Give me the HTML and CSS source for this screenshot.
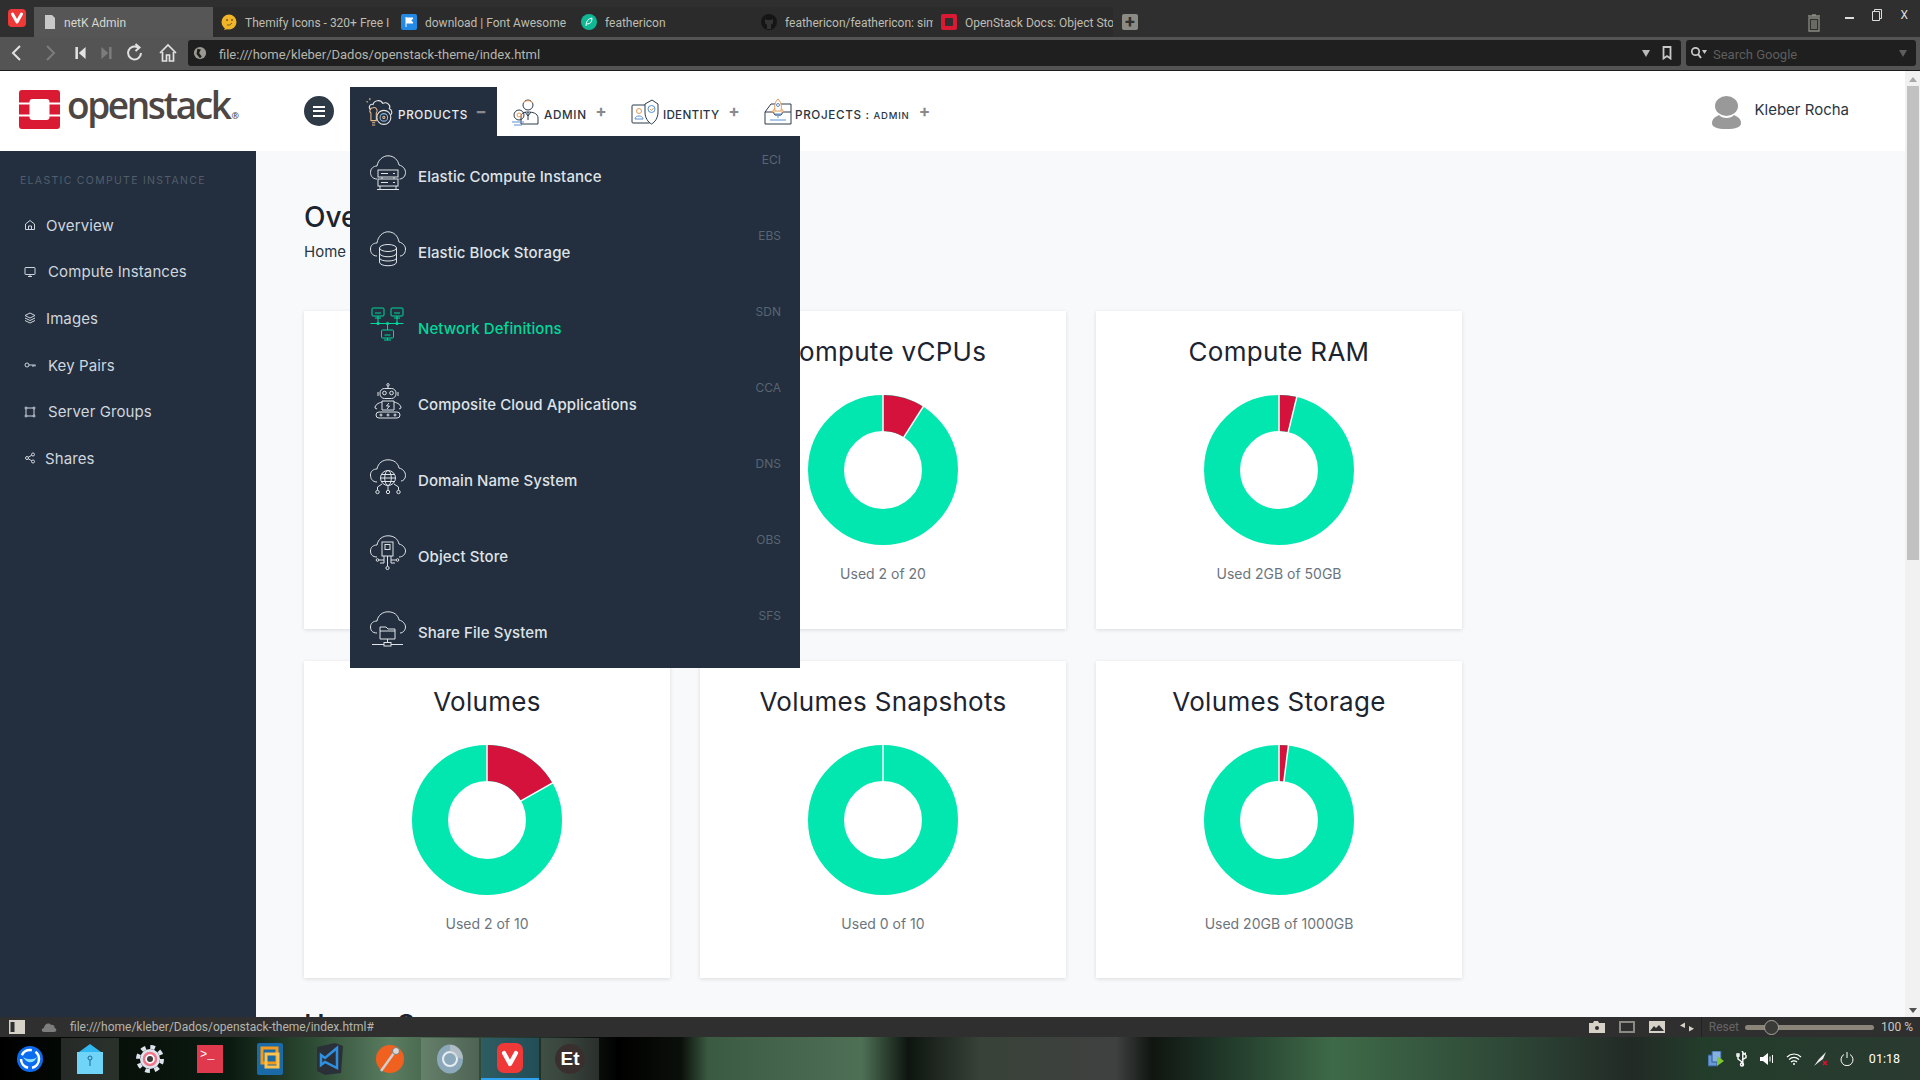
FILE: index.html
```html
<!DOCTYPE html>
<html>
<head>
    <meta charset="utf-8">
    <title>netK Admin</title>
    <link rel="stylesheet" href="styles.css">
</head>
<body>
<div class="screen">

    <!-- browser tabs -->
    <div class="tabstrip">
        <div class="vivaldi-btn">
            <svg viewBox="0 0 18 18" width="18" height="18"><rect width="18" height="18" rx="4" fill="#ef3939"/><path d="M4.5 5 L9 13 L13.5 5" fill="none" stroke="#fff" stroke-width="3" stroke-linecap="round" stroke-linejoin="round"/></svg>
        </div>
        <div class="tab tab-active">
            <svg class="tab-icon" viewBox="0 0 16 16"><path d="M3 1 H10 L13 4 V15 H3 Z" fill="#c9c9c9"/></svg>
            <span class="tab-text">netK Admin</span>
        </div>
        <div class="tab">
            <svg class="tab-icon" viewBox="0 0 16 16"><circle cx="8" cy="8" r="7.5" fill="#f0b429"/><path d="M4 14 L3 16 L7 15 Z" fill="#f0b429"/><circle cx="6" cy="6" r="1" fill="#7a5a10"/><circle cx="11" cy="6" r="1" fill="#7a5a10"/><path d="M6 11 Q9 12 11 9" stroke="#7a5a10" fill="none"/></svg>
            <span class="tab-text">Themify Icons - 320+ Free I</span>
        </div>
        <div class="tab">
            <svg class="tab-icon" viewBox="0 0 16 16"><rect width="16" height="16" rx="2" fill="#228ae6"/><path d="M5 3 V13 M5 4 H12 L10 6.5 L12 9 H5" fill="#fff" stroke="#fff"/></svg>
            <span class="tab-text">download | Font Awesome</span>
        </div>
        <div class="tab">
            <svg class="tab-icon" viewBox="0 0 16 16"><circle cx="8" cy="8" r="8" fill="#0fb795"/><path d="M5 12 Q5 5 11 4 Q11 10 6 10" fill="none" stroke="#fff"/></svg>
            <span class="tab-text">feathericon</span>
        </div>
        <div class="tab">
            <svg class="tab-icon" viewBox="0 0 16 16"><circle cx="8" cy="8" r="8" fill="#151515"/><path d="M4 5 L6 6 H10 L12 5 V9 L10 11 V15 H6 V11 L4 9 Z" fill="#333"/></svg>
            <span class="tab-text">feathericon/feathericon: sim</span>
        </div>
        <div class="tab">
            <svg class="tab-icon" viewBox="0 0 16 16"><rect width="16" height="16" rx="2" fill="#da1a32"/><rect x="4" y="4" width="8" height="8" rx="1" fill="#2f2f2f"/></svg>
            <span class="tab-text">OpenStack Docs: Object Sto</span>
        </div>
        <div class="tab-add">+</div>
        <div class="window-btns">
            <svg class="trash" viewBox="0 0 14 18" width="14" height="18"><path d="M1 2 H13 M5 1 H9 M2 4 H12 V17 H2 Z M5 6 V15 M7 6 V15 M9 6 V15" fill="none" stroke="#8c8c84" stroke-width="1.3"/></svg>
            <span class="win-btn win-min"></span>
            <svg class="win-max" viewBox="0 0 12 12" width="12" height="12"><path d="M3.5 2.5 V0.5 H10.5 V9.5 H8.5 M1.5 2.5 H8.5 V11.5 H1.5 Z" fill="none" stroke="#ddd" stroke-width="1"/></svg>
            <span class="win-close">X</span>
        </div>
    </div>

    <!-- browser toolbar -->
    <div class="toolbar">
        <div class="tool-btns">
            <svg viewBox="0 0 20 20" class="tool"><path d="M13 3 L6 10 L13 17" fill="none" stroke="#e2e2e2" stroke-width="2"/></svg>
            <svg viewBox="0 0 20 20" class="tool"><path d="M7 3 L14 10 L7 17" fill="none" stroke="#7c7c7c" stroke-width="2"/></svg>
            <svg viewBox="0 0 20 20" class="tool tool-small"><path d="M4 3 H7 V17 H4 Z M16 3 V17 L8 10 Z" fill="#e2e2e2"/></svg>
            <svg viewBox="0 0 20 20" class="tool tool-small"><path d="M16 3 H13 V17 H16 Z M4 3 V17 L12 10 Z" fill="#7c7c7c"/></svg>
            <svg viewBox="0 0 20 20" class="tool"><path d="M16 10 A6.5 6.5 0 1 1 13 4.5 M10.5 1 L14.5 4.5 L10.5 8" fill="none" stroke="#e2e2e2" stroke-width="2"/></svg>
            <svg viewBox="0 0 20 20" class="tool"><path d="M2 10 L10 2 L18 10 M4.5 9 V18 H8.5 V12 H11.5 V18 H15.5 V9" fill="none" stroke="#e2e2e2" stroke-width="1.7"/></svg>
        </div>
        <div class="addressbar">
            <svg viewBox="0 0 16 16" width="14" height="14"><circle cx="8" cy="8" r="7" fill="#9a9a92"/><path d="M5 3 L9 4 L7 8 L10 12 L8 14 L4 9 Z" fill="#1f1f1f"/></svg>
            <span class="url">file:///home/kleber/Dados/openstack-theme/index.html</span>
            <span class="arrow-down"></span>
            <svg viewBox="0 0 10 14" width="10" height="14"><path d="M1.5 1 H8.5 V12.5 L5 10 L1.5 12.5 Z" fill="none" stroke="#c9c9c9" stroke-width="1.8"/></svg>
        </div>
        <div class="searchbar">
            <svg viewBox="0 0 18 14" width="18" height="14"><circle cx="5.5" cy="5.5" r="3.7" fill="none" stroke="#c9c9c9" stroke-width="1.7"/><path d="M8 8 L11 12" stroke="#c9c9c9" stroke-width="2"/><path d="M12 4 H17 L14.5 8 Z" fill="#c9c9c9"/></svg>
            <span class="search-text">Search Google</span>
            <span class="arrow-down arrow-dim"></span>
        </div>
    </div>

    <!-- web page -->
    <div class="viewport">
        <div class="page">
            <div class="topbar">
                <div class="logo">
                    <svg viewBox="0 0 41 39" width="41" height="39">
                        <path d="M3 0 H38 Q41 0 41 3 V12.5 H30.5 V12 Q30.5 9 27.5 9 H13.5 Q10.5 9 10.5 12 V12.5 H0 V3 Q0 0 3 0 Z" fill="#da1a32"/>
                        <path d="M0 14.5 H10.5 V24.5 H0 Z M30.5 14.5 H41 V24.5 H30.5 Z" fill="#da1a32"/>
                        <path d="M3 39 H38 Q41 39 41 36 V26.5 H30.5 V27 Q30.5 30 27.5 30 H13.5 Q10.5 30 10.5 27 V26.5 H0 V36 Q0 39 3 39 Z" fill="#da1a32"/>
                    </svg>
                    <span class="logo-text">openstack<sup class="logo-r">®</sup></span>
                </div>
                <button class="burger"><span></span><span></span><span></span></button>

                <div class="nav">
                    <div class="nav-item nav-open">
                        <svg class="nav-icon" viewBox="1 1 25 26">
                            <path d="M6 12 C3 10 5 6 8 7 C9 3 15 2 17 6 C21 4 25 8 23 11 C26 12 26 16 24 17" stroke="#e6e6e6"/>
                            <path d="M6 15 V22 H11 V15 C13 13 11 9 8 10 C5 10 4 13 6 15 Z M7 24 H10 M7 26 H10" stroke="#e8b98a"/>
                            <circle cx="18" cy="19" r="6.5" stroke="#e6e6e6"/><circle cx="18" cy="19" r="3.5" stroke="#8fb8e0"/><circle cx="18" cy="19" r="1" stroke="#e8b98a"/>
                            <path d="M2 4 L3 5 M5 1 L5 3" stroke="#e8b98a"/>
                        </svg>
                        <span class="nav-label">PRODUCTS</span>
                        <span class="nav-sign">−</span>

                        <div class="dropdown">
                            <a class="drop-row" href="#">
                                <svg class="drop-icon" viewBox="0 0 36 36">
                                    <path d="M7 24 C2 24 0.5 20 0.5 17.5 C0.5 13.5 3.5 11 7 11 C8 5 13 0.8 18 0.8 C24 0.8 28 5 29 10 C33 11 35.5 14 35.5 17.5 C35.5 21 33 24 29.5 24"/>
                                    <rect x="8" y="15" width="20" height="7"/><rect x="8" y="24" width="20" height="7"/>
                                    <path d="M11 18.5 H18 M11 27.5 H18 M23 18.5 H25 M23 27.5 H25 M12 22 V24 M24 22 V24 M10 31 V34 M26 31 V34 M7 34.5 H29"/>
                                </svg>
                                <span class="drop-name">Elastic Compute Instance</span>
                                <span class="drop-code">ECI</span>
                            </a>
                            <a class="drop-row" href="#">
                                <svg class="drop-icon" viewBox="0 0 36 36">
                                    <path d="M7 25 C2 25 0.5 21 0.5 18 C0.5 14 3.5 12 7 12 C8 5 13 0.8 18 0.8 C24 0.8 28 5 29 11 C33 12 35.5 15 35.5 18 C35.5 22 33 25 30 25"/>
                                    <ellipse cx="18" cy="17" rx="8.5" ry="3.5"/>
                                    <path d="M9.5 17 V31 C9.5 36 26.5 36 26.5 31 V17 M9.5 22 C9.5 27 26.5 27 26.5 22 M9.5 27 C9.5 31 26.5 31 26.5 27"/>
                                </svg>
                                <span class="drop-name">Elastic Block Storage</span>
                                <span class="drop-code">EBS</span>
                            </a>
                            <a class="drop-row drop-active" href="#">
                                <svg class="drop-icon" viewBox="0 0 36 36">
                                    <rect x="2" y="1" width="12" height="8" rx="1"/><rect x="21" y="1" width="12" height="8" rx="1"/><rect x="11.5" y="23" width="12" height="8" rx="1"/>
                                    <path d="M5 6 H11 M24 6 H30 M14.5 28 H20.5 M8 9 V17 M27 9 V17 M17.5 17 V23 M5 11 H11 M24 11 H30 M14 33 H21 M17.5 31 V33 M0.5 16.5 H33.5"/>
                                    <circle cx="8" cy="16.5" r="1.2"/><circle cx="17.5" cy="16.5" r="1.2"/><circle cx="27" cy="16.5" r="1.2"/>
                                </svg>
                                <span class="drop-name">Network Definitions</span>
                                <span class="drop-code">SDN</span>
                            </a>
                            <a class="drop-row" href="#">
                                <svg class="drop-icon" viewBox="0 0 36 36">
                                    <circle cx="18" cy="1.8" r="1.2"/><path d="M18 3 V5.5"/>
                                    <rect x="10" y="5.5" width="16" height="10" rx="4.5"/><circle cx="14.5" cy="10" r="1.8"/><circle cx="21.5" cy="10" r="1.8"/>
                                    <path d="M8 9 V13 M28 9 V13 M12 18 H24 V27 H12 Z M12 19 C8 20 5 22 5 25 L7 26 M24 19 C28 20 31 22 31 25 L29 26 M19 20 L16.5 23 H19.5 L17 26"/>
                                    <rect x="6" y="29" width="24" height="6" rx="3"/><circle cx="11" cy="32" r="1"/><circle cx="18" cy="32" r="1"/><circle cx="25" cy="32" r="1"/>
                                </svg>
                                <span class="drop-name">Composite Cloud Applications</span>
                                <span class="drop-code">CCA</span>
                            </a>
                            <a class="drop-row" href="#">
                                <svg class="drop-icon" viewBox="0 0 36 36">
                                    <path d="M7 23 C2 23 0.5 19 0.5 16 C0.5 12 3.5 10 7 10 C8 4 13 0.8 18 0.8 C24 0.8 28 4 29 9 C33 10 35.5 13 35.5 16.5 C35.5 20 33 22 31 22"/>
                                    <circle cx="18" cy="19" r="7.5"/><ellipse cx="18" cy="19" rx="3.3" ry="7.5"/>
                                    <path d="M10.5 19 H25.5 M11.5 15.5 H24.5 M11.5 22.5 H24.5 M18 26.5 V31 M12 25 L7.5 28 V31 M24 25 L28.5 28 V31"/>
                                    <circle cx="7.5" cy="33" r="1.7"/><circle cx="18" cy="33" r="1.7"/><circle cx="28.5" cy="33" r="1.7"/>
                                </svg>
                                <span class="drop-name">Domain Name System</span>
                                <span class="drop-code">DNS</span>
                            </a>
                            <a class="drop-row" href="#">
                                <svg class="drop-icon" viewBox="0 0 36 36">
                                    <path d="M7 22 C2 22 0.5 19 0.5 16 C0.5 12 3.5 10 7 10 C8 4 13 0.8 18 0.8 C24 0.8 28 4 29 9 C33 10 35.5 13 35.5 16 C35.5 19 33 22 29 22"/>
                                    <rect x="12" y="7" width="11" height="14"/><rect x="15" y="9.5" width="5" height="5"/>
                                    <path d="M14 21 V28 M17.5 21 V31 M21 21 V28 M14 25 H9 M21 25 H26 M10 28 H14 M21 28 H25"/>
                                    <circle cx="17.5" cy="33" r="1.6"/><circle cx="7.5" cy="25" r="1.3"/><circle cx="27.5" cy="25" r="1.3"/>
                                </svg>
                                <span class="drop-name">Object Store</span>
                                <span class="drop-code">OBS</span>
                            </a>
                            <a class="drop-row" href="#">
                                <svg class="drop-icon" viewBox="0 0 36 36">
                                    <path d="M7 22 C2 22 0.5 19 0.5 16 C0.5 12 3.5 10 7 10 C8 4 13 0.8 18 0.8 C24 0.8 28 4 29 9 C33 10 35.5 13 35.5 16 C35.5 19 33 22 30 22"/>
                                    <path d="M10 16 H16 L18 18 H25 V28 H10 Z M10 20 H25 M17.5 28 V31 M2 33.5 H14 M21 33.5 H33"/>
                                    <rect x="14" y="31.5" width="7" height="3.5"/>
                                </svg>
                                <span class="drop-name">Share File System</span>
                                <span class="drop-code">SFS</span>
                            </a>
                        </div>
                    </div>
                    <div class="nav-item nav-admin">
                        <svg class="nav-icon" viewBox="0 0 28 28">
                            <circle cx="17" cy="7" r="5" stroke="#2b3a4a"/><path d="M12 5 C14 2 20 2 22 5" stroke="#e09a56"/>
                            <path d="M10 26 V19 C10 15 13 14 17 14 C21 14 27 15 27 20 V26 Z M17 14 V22 M14 14 L17 18 L20 14" stroke="#2b3a4a"/>
                            <circle cx="8" cy="17" r="5" stroke="#2b3a4a"/><circle cx="8" cy="17" r="2" stroke="#e09a56"/>
                            <path d="M1 24 H13 M3 27 H11" stroke="#5b8fd0"/>
                        </svg>
                        <span class="nav-label">ADMIN</span>
                        <span class="nav-sign">+</span>
                    </div>
                    <div class="nav-item nav-identity">
                        <svg class="nav-icon" viewBox="0 0 28 28">
                            <rect x="1" y="7" width="18" height="18" rx="1" stroke="#2b3a4a"/>
                            <circle cx="8" cy="13" r="2.5" stroke="#e09a56"/><path d="M4 21 C4 17 12 17 12 21 Z" stroke="#5b8fd0"/>
                            <path d="M14 6 L21 2 L27 6 V14 C27 20 24 24 20.5 26 C17 24 14 20 14 14 Z" stroke="#2b3a4a" fill="#fff"/>
                            <circle cx="20.5" cy="11" r="3.5" stroke="#5b8fd0"/><path d="M19 11 L20.5 12.5 L22.5 10" stroke="#e09a56"/>
                        </svg>
                        <span class="nav-label">IDENTITY</span>
                        <span class="nav-sign">+</span>
                    </div>
                    <div class="nav-item nav-projects">
                        <svg class="nav-icon" viewBox="0 0 28 28">
                            <path d="M1 14 L7 6 H11 M17 6 H27 V26 H1 V14 H9 L11 17 H17 L19 14 H27" stroke="#2b3a4a"/>
                            <path d="M14 1 C11 4 10 8 11 13 H17 C18 8 17 4 14 1 Z M11 10 L8 14 H11 M17 10 L20 14 H17" stroke="#e09a56"/>
                            <circle cx="14" cy="7" r="1.5" stroke="#5b8fd0"/><path d="M12 15 V18 M14 15 V20 M16 15 V18 M6 22 H22" stroke="#5b8fd0"/>
                        </svg>
                        <span class="nav-label">PROJECTS : <small class="nav-small">ADMIN</small></span>
                        <span class="nav-sign">+</span>
                    </div>
                </div>

                <div class="user">
                    <svg viewBox="0 0 29 33" width="29" height="33"><ellipse cx="14.5" cy="10" rx="11.5" ry="10" fill="#999"/><path d="M7 19 C5 20 0 22 0 27 C0 31 5 33 14.5 33 C24 33 29 31 29 27 C29 22 24 20 22 19 C19 23 10 23 7 19 Z" fill="#999"/></svg>
                    <span class="user-name">Kleber Rocha</span>
                </div>
            </div>

            <div class="main">
                <div class="sidebar">
                    <div class="side-title">ELASTIC COMPUTE INSTANCE</div>
                    <a class="side-link" href="#">
                        <svg class="side-icon" viewBox="0 0 24 24"><path d="M3 10 L12 3 L21 10 V21 H3 Z M9 21 V14 H15 V21"/></svg>
                        <span>Overview</span>
                    </a>
                    <a class="side-link side-link-wide" href="#">
                        <svg class="side-icon" viewBox="0 0 24 24"><rect x="2" y="3" width="20" height="14" rx="1"/><path d="M8 21 H16 M12 17 V21"/></svg>
                        <span>Compute Instances</span>
                    </a>
                    <a class="side-link" href="#">
                        <svg class="side-icon" viewBox="0 0 24 24"><path d="M12 2 L22 7 L12 12 L2 7 Z M2 12 L12 17 L22 12 M2 17 L12 22 L22 17"/></svg>
                        <span>Images</span>
                    </a>
                    <a class="side-link side-link-wide" href="#">
                        <svg class="side-icon" viewBox="0 0 24 24"><circle cx="6" cy="12" r="4"/><path d="M10 12 H23 M18 12 V16 M22 12 V15"/></svg>
                        <span>Key Pairs</span>
                    </a>
                    <a class="side-link side-link-wide" href="#">
                        <svg class="side-icon" viewBox="0 0 24 24"><path d="M6 4 H18 M6 20 H18 M4 6 V18 M20 6 V18"/><circle cx="4" cy="4" r="2"/><circle cx="20" cy="4" r="2"/><circle cx="4" cy="20" r="2"/><circle cx="20" cy="20" r="2"/></svg>
                        <span>Server Groups</span>
                    </a>
                    <a class="side-link side-link-narrow" href="#">
                        <svg class="side-icon" viewBox="0 0 24 24"><circle cx="18" cy="5" r="3"/><circle cx="6" cy="12" r="3"/><circle cx="18" cy="19" r="3"/><path d="M8.5 10.5 L15.5 6.5 M8.5 13.5 L15.5 17.5"/></svg>
                        <span>Shares</span>
                    </a>
                </div>

                <div class="content">
                    <h1 class="page-title">Overview</h1>
                    <div class="crumbs">Home / Overview</div>

                    <div class="cards">
                        <div class="card">
                            <h2 class="card-title">Instances</h2>
                            <svg class="donut" viewBox="-76 -76 152 152">
                                <circle class="ring-free" r="57"/>
                                <circle class="ring-used" r="57" pathLength="100" stroke-dasharray="17 83"/>
                                <line class="ring-cut" x1="0" y1="-38" x2="0" y2="-76"/>
                            </svg>
                            <div class="card-used">Used 2 of 10</div>
                        </div>
                        <div class="card">
                            <h2 class="card-title">Compute vCPUs</h2>
                            <svg class="donut" viewBox="-76 -76 152 152">
                                <circle class="ring-free" r="57"/>
                                <circle class="ring-used" r="57" pathLength="100" stroke-dasharray="9 91"/>
                                <line class="ring-cut" x1="0" y1="-38" x2="0" y2="-76"/>
                                <line class="ring-cut" x1="0" y1="-38" x2="0" y2="-76" transform="rotate(32.4)"/>
                            </svg>
                            <div class="card-used">Used 2 of 20</div>
                        </div>
                        <div class="card">
                            <h2 class="card-title">Compute RAM</h2>
                            <svg class="donut" viewBox="-76 -76 152 152">
                                <circle class="ring-free" r="57"/>
                                <circle class="ring-used" r="57" pathLength="100" stroke-dasharray="3.8 96.2"/>
                                <line class="ring-cut" x1="0" y1="-38" x2="0" y2="-76"/>
                                <line class="ring-cut" x1="0" y1="-38" x2="0" y2="-76" transform="rotate(13.7)"/>
                            </svg>
                            <div class="card-used">Used 2GB of 50GB</div>
                        </div>
                        <div class="card">
                            <h2 class="card-title">Volumes</h2>
                            <svg class="donut" viewBox="-76 -76 152 152">
                                <circle class="ring-free" r="57"/>
                                <circle class="ring-used" r="57" pathLength="100" stroke-dasharray="16.8 83.2"/>
                                <line class="ring-cut" x1="0" y1="-38" x2="0" y2="-76"/>
                                <line class="ring-cut" x1="0" y1="-38" x2="0" y2="-76" transform="rotate(60.5)"/>
                            </svg>
                            <div class="card-used">Used 2 of 10</div>
                        </div>
                        <div class="card">
                            <h2 class="card-title">Volumes Snapshots</h2>
                            <svg class="donut" viewBox="-76 -76 152 152">
                                <circle class="ring-free" r="57"/>
                                <line class="ring-cut" x1="0" y1="-38" x2="0" y2="-76"/>
                            </svg>
                            <div class="card-used">Used 0 of 10</div>
                        </div>
                        <div class="card">
                            <h2 class="card-title">Volumes Storage</h2>
                            <svg class="donut" viewBox="-76 -76 152 152">
                                <circle class="ring-free" r="57"/>
                                <circle class="ring-used" r="57" pathLength="100" stroke-dasharray="2 98"/>
                                <line class="ring-cut" x1="0" y1="-38" x2="0" y2="-76"/>
                                <line class="ring-cut" x1="0" y1="-38" x2="0" y2="-76" transform="rotate(7.2)"/>
                            </svg>
                            <div class="card-used">Used 20GB of 1000GB</div>
                        </div>
                    </div>

                    <h1 class="page-title section-title">Usage Summary</h1>
                </div>
            </div>
        </div>

        <div class="scrollbar">
            <span class="scroll-up"></span>
            <span class="scroll-thumb"></span>
            <span class="scroll-down"></span>
        </div>
    </div>

    <!-- browser status bar -->
    <div class="statusbar">
        <svg viewBox="0 0 16 14" width="16" height="14"><rect width="16" height="14" fill="#d6d2c8"/><rect x="1.5" y="2" width="4" height="10" fill="#2f2f2f"/></svg>
        <svg class="status-cloud" viewBox="0 0 16 10" width="16" height="10"><path d="M3 10 C0 10 0 6 3 6 C3 2 8 0 10 3 C13 2 14 5 13.5 6 C16 6 16 10 13 10 Z" fill="#7d7d7d"/></svg>
        <span class="status-url">file:///home/kleber/Dados/openstack-theme/index.html#</span>
        <div class="status-right">
            <svg viewBox="0 0 16 12" width="16" height="12"><path d="M0 2 H4 L5 0 H9 L10 2 H16 V12 H0 Z" fill="#d6d2c8"/><circle cx="8" cy="7" r="2" fill="#2f2f2f"/></svg>
            <svg viewBox="0 0 16 12" width="16" height="12"><rect x="1" y="1" width="14" height="10" fill="none" stroke="#8a8a82" stroke-width="2"/></svg>
            <svg viewBox="0 0 16 12" width="16" height="12"><rect width="16" height="12" fill="#d6d2c8"/><path d="M1 10 L5 5 L7 7 L10 4 L15 10 Z" fill="#2f2f2f"/></svg>
            <svg viewBox="0 0 16 10" width="16" height="10"><path d="M6 0.5 L1 3.5 L6 6 Z M10 4 L15 6.8 L10 9.5 Z" fill="#d6d2c8"/></svg>
            <span class="status-sep"></span>
            <span class="status-reset">Reset</span>
            <span class="zoom-slider"><span class="zoom-knob"></span></span>
            <span class="zoom-value">100 %</span>
        </div>
    </div>

    <!-- desktop taskbar -->
    <div class="taskbar">
        <div class="dock">
            <span class="dock-cell">
                <svg viewBox="0 0 28 28" width="28" height="28"><circle cx="14" cy="14" r="13" fill="#0c6cf0"/><circle cx="14" cy="14" r="9" fill="none" stroke="#fff" stroke-width="2.5" stroke-dasharray="12 4"/><path d="M7 12 C11 19 18 19 21 12 C18 15 11 15 7 12 Z" fill="#8fe0ff"/></svg>
            </span>
            <span class="dock-cell dock-lit">
                <svg viewBox="0 0 26 32" width="26" height="32"><path d="M2 9 L13 1 L24 9 Z" fill="#31b8f0"/><path d="M0 9 H26 V31 H0 Z" fill="#6fd4f7"/><circle cx="13" cy="15" r="2" fill="none" stroke="#1c6a92"/><path d="M13 17 V23" stroke="#1c6a92"/></svg>
            </span>
            <span class="dock-cell">
                <svg viewBox="0 0 28 28" width="28" height="28"><circle cx="14" cy="14" r="12" fill="none" stroke="#dfe3ee" stroke-width="4" stroke-dasharray="4.71 4.71"/><circle cx="14" cy="14" r="10" fill="#dfe3ee"/><circle cx="14" cy="14" r="6" fill="#fff" stroke="#f0788c" stroke-width="2.5"/><circle cx="14" cy="14" r="3" fill="#3a3a3a"/></svg>
            </span>
            <span class="dock-cell">
                <span class="dock-term">&gt;_</span>
            </span>
            <span class="dock-cell">
                <svg viewBox="0 0 26 32" width="26" height="32"><rect width="26" height="32" rx="2" fill="#1a6aa8"/><rect x="5" y="5" width="15" height="15" fill="none" stroke="#f39a1d" stroke-width="3"/><rect x="9" y="11" width="12" height="13" fill="none" stroke="#ffc24d" stroke-width="3"/></svg>
            </span>
            <span class="dock-cell">
                <svg viewBox="0 0 26 32" width="26" height="32"><path d="M0 4 L18 0 L26 3 L24 30 L8 32 L0 28 Z" fill="#2b3038"/><path d="M20 5 V25 L8 19 L4 22 V12 L8 15 Z" fill="none" stroke="#2f8fe0" stroke-width="2.5"/></svg>
            </span>
            <span class="dock-cell">
                <svg viewBox="0 0 28 30" width="28" height="30"><circle cx="14" cy="15" r="14" fill="#f0601f"/><path d="M5 27 L18 9" stroke="#cfcfcf" stroke-width="2.5"/><circle cx="20" cy="7" r="3.5" fill="#d8d8d8" stroke="#777"/></svg>
            </span>
            <span class="dock-cell dock-lit">
                <svg viewBox="0 0 26 30" width="26" height="30"><ellipse cx="13" cy="15" rx="13" ry="14.5" fill="#8ca9bc"/><circle cx="13" cy="15" r="7" fill="none" stroke="#e6eef2" stroke-width="2"/><path d="M13 1 A13 14.5 0 0 1 26 15 L19 13 A7 7 0 0 0 13 8 Z" fill="#c7c9c9" opacity=".6"/></svg>
            </span>
            <span class="dock-cell dock-current">
                <svg viewBox="0 0 26 30" width="26" height="30"><rect width="26" height="30" rx="7" fill="#ef3939"/><path d="M7 10 L13 21 L19 10" fill="none" stroke="#fff" stroke-width="4.2" stroke-linecap="round" stroke-linejoin="round"/></svg>
            </span>
            <span class="dock-cell dock-lit">
                <span class="dock-et">Et</span>
            </span>
        </div>
        <div class="tray">
            <svg viewBox="0 0 16 16" width="16" height="16"><rect x="0" y="4" width="9" height="11" fill="#6a9ad6" stroke="#2f5a96"/><rect x="4" y="0" width="9" height="11" fill="#86b0e0" stroke="#2f5a96"/><path d="M9 5 L16 10 L9 15 Z" fill="#7ec832"/></svg>
            <svg viewBox="0 0 12 16" width="12" height="16"><path d="M6 0 L8 3 H6.8 V14 M6 15 A1.5 1.5 0 1 0 6 12 A1.5 1.5 0 1 0 6 15 M6 11 L2 8 V5 M6 9 L10 6.5 V4 M1 3 H3 V5 H1 Z M10 2 A1 1 0 1 0 10 4" fill="none" stroke="#fff" stroke-width="1.4"/></svg>
            <svg viewBox="0 0 14 12" width="14" height="12"><path d="M0 4 H3 L8 0 V12 L3 8 H0 Z" fill="#fff"/><path d="M10 3.5 V8.5 M12.5 2 V10" stroke="#fff"/></svg>
            <svg viewBox="0 0 16 12" width="16" height="12"><path d="M1 4 C5 0 11 0 15 4 M3 6.5 C6 4 10 4 13 6.5 M5 9 C7 7.5 9 7.5 11 9" fill="none" stroke="#fff" stroke-width="1.2"/><circle cx="8" cy="11" r="1" fill="#fff"/></svg>
            <svg viewBox="0 0 14 14" width="14" height="14"><path d="M0 14 L5 7 L11 1 L12 0 L9 7 L5 10 Z" fill="#eee"/><path d="M9 9 L13 13 M13 9 L9 13" stroke="#e00f2c" stroke-width="1.5"/></svg>
            <svg viewBox="0 0 14 14" width="14" height="14"><path d="M4 2.5 A6 6 0 1 0 10 2.5 M7 0 V6" fill="none" stroke="#fff" stroke-width="1"/></svg>
            <span class="clock">01:18</span>
        </div>
    </div>
</div>
</body>
</html>
```

FILE: styles.css
```css
* { box-sizing: border-box; }
html, body { margin: 0; padding: 0; height: 100%; overflow: hidden; }
body { font-family: "Inter", "Liberation Sans", sans-serif; }
a { text-decoration: none; color: inherit; }
h1, h2 { margin: 0; font-weight: 400; }

.screen { height: 100vh; display: flex; flex-direction: column; }

/* browser tabs */
.tabstrip { height: 37px; flex: none; background: #2f2f2f; display: flex; align-items: flex-end; font-family: "Roboto", sans-serif; }
.vivaldi-btn { width: 34px; height: 37px; padding: 9px 0 0 8px; }
.tab { width: 180px; height: 30px; display: flex; align-items: center; padding-left: 8px; gap: 8px; color: #bdbdb2; font-size: 12px; background: #2b2b2b; overflow: hidden; }
.tab-active { width: 179px; gap: 6px; background: #565656; color: #d8d8d0; }
.tab-icon { width: 16px; height: 16px; flex: none; }
.tab-text { white-space: nowrap; flex: 1; padding-top: 2px; }
.tab-add { width: 16px; height: 16px; margin: 0 0 7px 9px; background: #8b8b85; color: #2f2f2f; border-radius: 2px; font-size: 18px; line-height: 15px; text-align: center; font-weight: 700; }
.window-btns { margin-left: auto; height: 37px; display: flex; align-items: flex-start; color: #ddd; }
.trash { margin: 14px 24px 0 0; }
.win-min { width: 9px; height: 2px; background: #ddd; margin: 17px 17px 0 0; }
.win-max { margin: 9px 17px 0 0; }
.win-close { font-size: 12px; margin: 8px 12px 0 0; }

/* browser toolbar */
.toolbar { height: 34px; flex: none; background: #545454; border-bottom: 1px solid #1c1c1c; display: flex; align-items: center; padding-bottom: 1px; }
.tool-btns { width: 188px; display: flex; align-items: center; padding-left: 7px; gap: 13px; }
.tool { width: 20px; height: 20px; flex: none; }
.tool-small { width: 17px; margin: 0 -3px 0 -1px; }
.addressbar { width: 1493px; height: 26px; background: #1f1f1f; border-radius: 3px; display: flex; align-items: center; padding: 0 9px 0 5px; gap: 12px; margin-right: 5px; color: #b5b5ad; font-family: "Roboto", sans-serif; font-size: 13px; }
.url { flex: 1; padding-top: 2px; }
.arrow-down { width: 0; height: 0; border-left: 4px solid transparent; border-right: 4px solid transparent; border-top: 7px solid #bbb; }
.searchbar { width: 230px; height: 26px; background: #1f1f1f; border-radius: 3px; display: flex; align-items: center; padding: 0 9px 0 4px; color: #5e5e5e; font-family: "Roboto", sans-serif; font-size: 13px; }
.search-text { flex: 1; margin-left: 5px; padding-top: 2px; }
.arrow-dim { border-top-color: #5e5e5e; }

/* page */
.viewport { flex: 1; min-height: 0; display: flex; background: #fff; }
.page { flex: 1; min-width: 0; display: flex; flex-direction: column; }
.scrollbar { width: 15px; background: #f1f1f1; display: flex; flex-direction: column; align-items: center; }
.scroll-up { width: 0; height: 0; margin: 6px 0 4px; border-left: 4px solid transparent; border-right: 4px solid transparent; border-bottom: 5px solid #a8a8a8; }
.scroll-thumb { width: 12px; height: 474px; background: #c1c1c1; }
.scroll-down { width: 0; height: 0; margin: auto 0 4px; border-left: 4px solid transparent; border-right: 4px solid transparent; border-top: 5px solid #505050; }

.topbar { height: 80px; flex: none; background: #fff; display: flex; align-items: flex-start; position: relative; z-index: 2; }
.logo { display: flex; align-items: center; width: 304px; height: 39px; margin-top: 19px; padding-left: 19px; }
.logo-text { font-family: "Open Sans", sans-serif; font-size: 37px; font-weight: 600; color: #4e4643; letter-spacing: -2.4px; margin-left: 7px; line-height: 39px; }
.logo-r { font-size: 9px; letter-spacing: 0; vertical-align: baseline; margin-left: 2px; }
.burger { width: 30px; height: 30px; margin: 25px 16px 0 0; padding: 0; border: 0; border-radius: 50%; background: #2f3a47; display: flex; flex-direction: column; align-items: center; justify-content: center; gap: 2.5px; }
.burger span { width: 12px; height: 2px; background: #fff; }

.nav { display: flex; margin-top: 16px; height: 49px; }
.nav-item { position: relative; height: 49px; display: flex; align-items: center; padding: 0 10px 0 14px; color: #2a3542; }
.nav-open { width: 147px; background: #232f3e; color: #e8ebee; padding-left: 15px; }
.nav-admin { width: 120px; }
.nav-identity { width: 133px; }
.nav-icon { width: 28px; height: 28px; flex: none; fill: none; stroke-width: 1; }
.nav-label { font-size: 11.7px; font-weight: 500; letter-spacing: .65px; margin: 7px 0 0 5px; white-space: nowrap; }
.nav-identity .nav-label { letter-spacing: .25px; margin-left: 4px; }
.nav-projects .nav-label { margin-left: 3px; }
.nav-small { font-size: 9.5px; letter-spacing: .8px; }
.nav-sign { margin-left: auto; width: 12px; text-align: center; color: #8a8a8a; font-size: 17px; font-weight: 700; line-height: 16px; margin-bottom: 2px; }
.nav-projects .nav-sign { margin-left: 9px; }

.dropdown { position: absolute; left: 0; top: 49px; width: 450px; background: #232f3e; }
.drop-row { height: 76px; display: flex; align-items: flex-start; padding: 19px 19px 0 20px; color: #dfe3e8; position: relative; }
.drop-icon { width: 36px; height: 36px; flex: none; fill: none; stroke: currentColor; stroke-width: 1; }
.drop-name { font-size: 15px; font-weight: 500; margin: 12px 0 0 12px; line-height: 20px; letter-spacing: .08px; }
.drop-code { margin-left: auto; font-size: 12px; color: #586573; line-height: 16px; margin-top: -3px; }
.drop-active { color: #00d99b; }

.user { margin-left: auto; display: flex; align-items: flex-start; padding: 25px 56px 0 0; }
.user-name { font-size: 15px; color: #2a3542; margin: 4px 0 0 13px; line-height: 20px; }

.main { flex: 1; min-height: 0; display: flex; overflow: hidden; }
.sidebar { width: 256px; flex: none; background: #232f3e; color: #cfd6de; padding-top: 22px; }
.side-title { font-size: 10.5px; letter-spacing: 1.3px; color: #515e6c; padding-left: 20px; line-height: 16px; margin-bottom: 13px; white-space: nowrap; }
.side-link { height: 46.6px; display: flex; align-items: center; padding-left: 24px; font-size: 15px; letter-spacing: .1px; }
.side-icon { width: 12px; height: 12px; flex: none; fill: none; stroke: currentColor; stroke-width: 2; margin-right: 10px; }
.side-link-wide .side-icon { margin-right: 12px; }
.side-link-narrow .side-icon { margin-right: 9px; }

.content { flex: 1; min-width: 0; background: #f8f9fb; padding: 49px 0 0 48px; }
.page-title { font-size: 28px; font-weight: 500; color: #1c2430; line-height: 34px; }
.crumbs { font-size: 15px; color: #2a3542; line-height: 20px; margin-top: 8px; }
.cards { display: grid; grid-template-columns: repeat(3, 366px); grid-auto-rows: 317.5px; column-gap: 30px; row-gap: 32px; margin-top: 49px; }
.card { background: #fff; box-shadow: 0 1px 4px rgba(0, 0, 0, .12); display: flex; flex-direction: column; align-items: center; padding-top: 22px; }
.card-title { font-size: 26px; letter-spacing: .3px; line-height: 38px; color: #1c2430; white-space: nowrap; }
.donut { width: 152px; height: 152px; margin-top: 23px; }
.ring-free { fill: none; stroke: #02e6b0; stroke-width: 36; }
.ring-used { fill: none; stroke: #d4123c; stroke-width: 36; transform: rotate(-90deg); }
.ring-cut { stroke: #fff; stroke-width: 1.5; }
.card-used { font-size: 14px; color: #6c757d; line-height: 22px; margin-top: 17px; }
.section-title { margin-top: 30px; }

/* browser status bar */
.statusbar { height: 20px; flex: none; background: #2f2f2f; display: flex; align-items: center; padding-left: 9px; color: #b5b5ad; font-family: "Roboto", sans-serif; font-size: 12px; }
.status-cloud { margin-left: 16px; }
.status-url { margin-left: 13px; }
.status-right { margin-left: auto; display: flex; align-items: center; gap: 14px; padding-right: 7px; }
.status-sep { width: 1px; height: 20px; background: #222; margin: 0 -7px 0 -8px; }
.status-reset { color: #666; }
.zoom-slider { width: 129px; height: 5px; border-radius: 3px; background: #8a8578; position: relative; margin: 0 -7px 0 -8px; }
.zoom-knob { position: absolute; left: 19px; top: -5px; width: 15px; height: 15px; border-radius: 50%; background: #3a3a38; border: 1px solid #a8a49a; }
.zoom-value { color: #c8c8c0; }

/* desktop taskbar */
.taskbar { height: 43px; flex: none; display: flex; align-items: center; justify-content: space-between;
    background: linear-gradient(90deg, #000 0, #071009 120px, #0b1a10 230px, #2c4a33 310px, #5a7d60 390px, #324a38 480px, #1a2a20 560px, #000 618px, #0b0f0a 681px, #3b5a42 708px, #4e7055 862px, #0e1510 908px, #384238 980px, #3f4040 1116px, #101510 1152px, #1c3024 1206px, #3e6a48 1333px, #2f4a38 1496px, #222a26 1632px, #233d2b 1705px, #2a3a30 1920px); }
.dock { display: flex; align-self: stretch; gap: 2px; padding: 1px 0 0 1px; }
.dock-cell { width: 58px; display: flex; align-items: center; justify-content: center; }
.dock-lit { background: rgba(255, 255, 255, .14); }
.dock-current { background: rgba(40, 130, 180, .35); border-bottom: 2px solid #2ea3f2; }
.dock-term { width: 26px; height: 28px; background: #e0394d; color: #fff; font-family: "Liberation Mono", monospace; font-size: 12px; padding: 3px 0 0 3px; }
.dock-et { width: 30px; height: 30px; border-radius: 50%; background: #3a2f2f; color: #fff; font-family: "Liberation Sans", sans-serif; font-size: 19px; font-weight: 700; text-align: center; line-height: 29px; }
.tray { display: flex; align-items: center; gap: 12px; padding-right: 20px; color: #fff; }
.clock { font-size: 12.5px; font-family: "Roboto", sans-serif; margin-left: 3px; }
```
